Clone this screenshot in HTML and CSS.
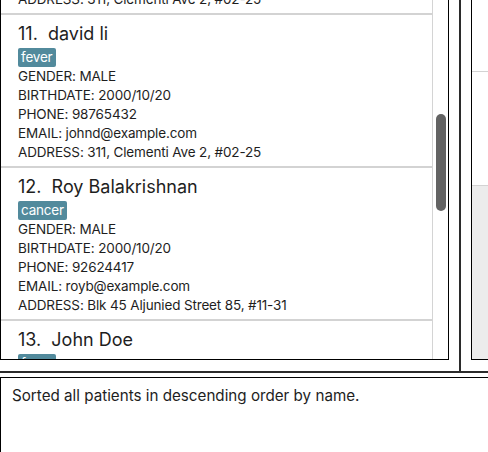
FILE: index.html
```html
<!DOCTYPE html>
<html>
<head>
<meta charset="utf-8">
<link rel="stylesheet" href="styles.css">
</head>
<body>
<div class="app">
  <div class="top">
    <div class="left">
      <div class="list-panel">
        <div class="list">
          <div class="cells">
            <div class="cell">
              <div class="name">10.&nbsp; Alex Yeoh</div>
              <div class="tags"><span class="tag">fever</span></div>
              <div class="field">GENDER: MALE</div>
              <div class="field">BIRTHDATE: 2000/10/20</div>
              <div class="field">PHONE: 98765432</div>
              <div class="field">EMAIL: johnd@example.com</div>
              <div class="field">ADDRESS: 311, Clementi Ave 2, #02-25</div>
            </div>
            <div class="cell">
              <div class="name">11.&nbsp; david li</div>
              <div class="tags"><span class="tag">fever</span></div>
              <div class="field">GENDER: MALE</div>
              <div class="field">BIRTHDATE: 2000/10/20</div>
              <div class="field">PHONE: 98765432</div>
              <div class="field">EMAIL: johnd@example.com</div>
              <div class="field">ADDRESS: 311, Clementi Ave 2, #02-25</div>
            </div>
            <div class="cell">
              <div class="name">12.&nbsp; Roy Balakrishnan</div>
              <div class="tags"><span class="tag">cancer</span></div>
              <div class="field">GENDER: MALE</div>
              <div class="field">BIRTHDATE: 2000/10/20</div>
              <div class="field">PHONE: 92624417</div>
              <div class="field">EMAIL: royb@example.com</div>
              <div class="field">ADDRESS: Blk 45 Aljunied Street 85, #11-31</div>
            </div>
            <div class="cell">
              <div class="name">13.&nbsp; John Doe</div>
              <div class="tags"><span class="tag">fever</span></div>
              <div class="field">GENDER: MALE</div>
              <div class="field">BIRTHDATE: 2000/10/20</div>
              <div class="field">PHONE: 98765432</div>
              <div class="field">EMAIL: johnd@example.com</div>
              <div class="field">ADDRESS: 311, Clementi Ave 2, #02-25</div>
            </div>
          </div>
        </div>
        <div class="scrollbar"><div class="thumb"></div></div>
      </div>
    </div>
    <div class="vdivider"></div>
    <div class="right">
      <div class="detail-panel">
        <div class="d1"></div>
        <div class="d2"></div>
        <div class="d3"></div>
      </div>
    </div>
  </div>
  <div class="hdivider"></div>
  <div class="result">Sorted all patients in descending order by name.</div>
</div>
</body>
</html>
```

FILE: styles.css
```css
html, body {
  margin: 0;
  padding: 0;
  background: #ffffff;
  overflow: hidden;
}
body {
  font-family: "Inter", "Roboto", sans-serif;
  color: #1e1e1e;
  width: 488px;
  height: 452px;
}
.app {
  display: flex;
  flex-direction: column;
  width: 488px;
}
.top {
  display: flex;
  height: 371px;
}
.left {
  width: 459px;
  padding: 0 10px 11px 0;
  box-sizing: border-box;
  display: flex;
}
.list-panel {
  flex: 1;
  display: flex;
  border: 1px solid #000;
  border-top: none;
  overflow: hidden;
  background: #fff;
}
.list {
  width: 432px;
  border-right: 1px solid #d4d4d4;
  box-sizing: border-box;
  overflow: hidden;
}
.cells {
  margin-top: -138px;
}
.cell {
  height: 153px;
  box-sizing: border-box;
  border-bottom: 2px solid #d3d3d3;
  padding: 7px 0 0 17px;
}
.name {
  font-size: 18px;
  line-height: 23px;
  white-space: pre;
  color: #1e1e1e;
}
.tags {
  height: 20px;
  margin-top: 1px;
  margin-bottom: 1px;
}
.tag {
  display: inline-block;
  background: #528a9c;
  color: #ffffff;
  font-size: 13.5px;
  line-height: 19px;
  padding: 0 3px;
  border-radius: 2px;
  letter-spacing: -0.2px;
}
.field {
  font-size: 13.5px;
  line-height: 19px;
  letter-spacing: -0.15px;
  white-space: nowrap;
}
.scrollbar {
  flex: 1;
  padding: 114px 0 0 3px;
}
.thumb {
  width: 10px;
  height: 97px;
  border-radius: 5px;
  background: #636363;
}
.vdivider {
  width: 2px;
  background: #2b2b2b;
}
.right {
  flex: 1;
  padding: 0 0 11px 10px;
  display: flex;
}
.detail-panel {
  flex: 1;
  display: flex;
  flex-direction: column;
  border-left: 1px solid #000;
  border-bottom: 1px solid #000;
}
.d1 {
  height: 71px;
  border-bottom: 1px solid #d3d3d3;
}
.d2 {
  height: 113px;
  border-bottom: 1px solid #d3d3d3;
}
.d3 {
  flex: 1;
  background: #ececec;
}
.hdivider {
  height: 2px;
  background: #2b2b2b;
}
.result {
  margin-top: 4px;
  width: 500px;
  height: 80px;
  border: 1px solid #000;
  padding: 8px 11px;
  box-sizing: border-box;
  font-size: 15.2px;
  line-height: 20px;
  color: #1e1e1e;
}
```
